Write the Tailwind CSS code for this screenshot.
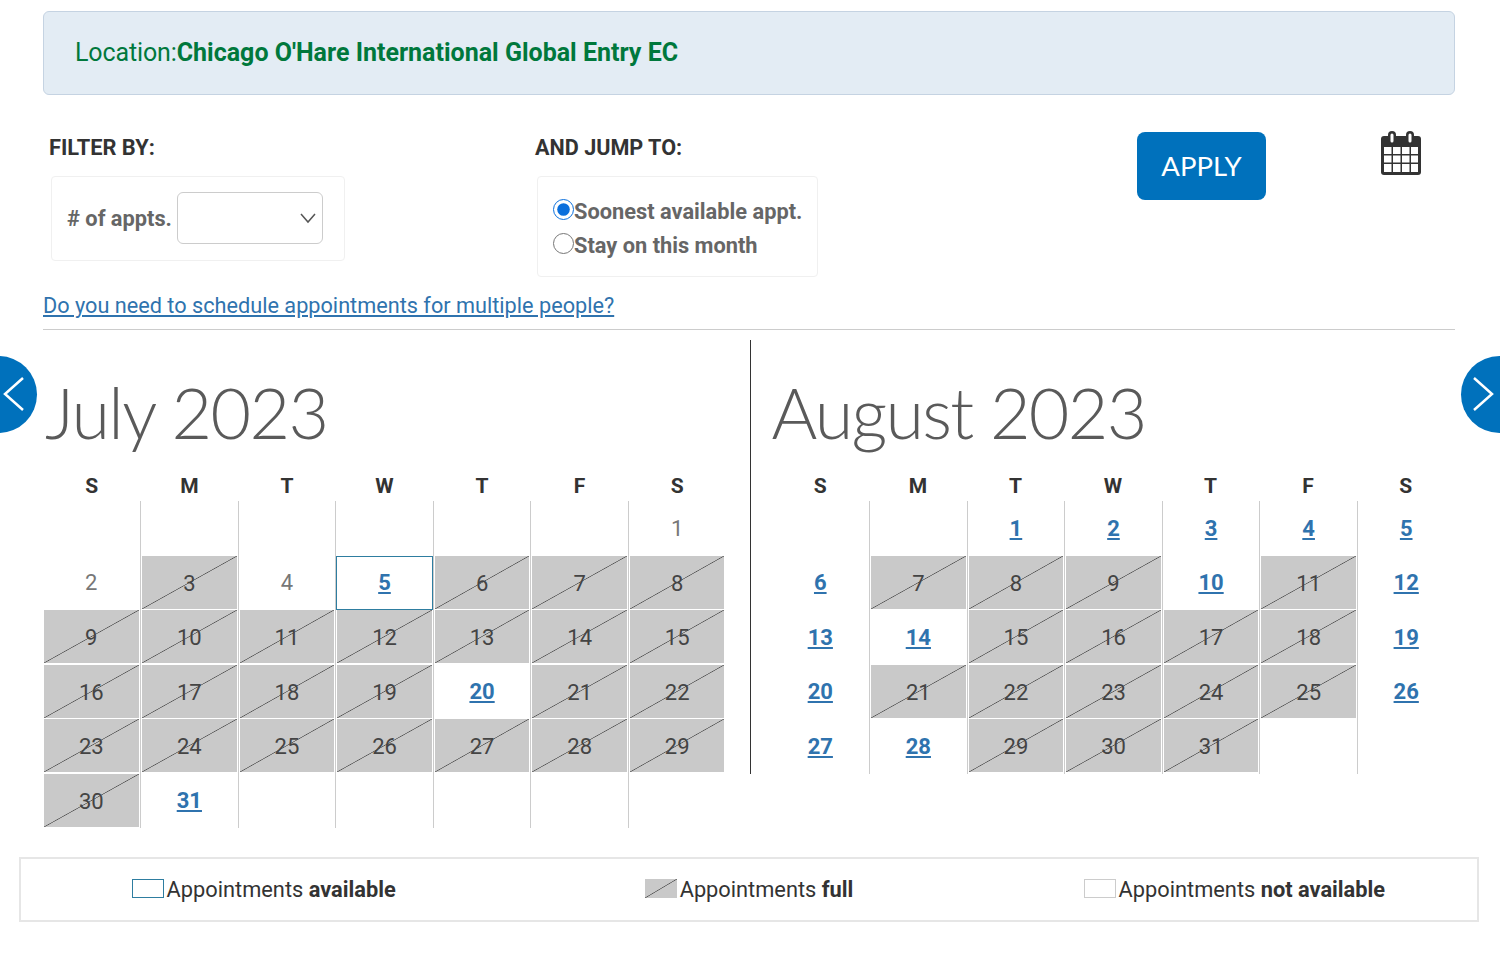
<!DOCTYPE html>
<html lang="en">
<head>
<meta charset="utf-8">
<title>Calendar</title>
<script src="https://cdn.jsdelivr.net/npm/@tailwindcss/browser@4"></script>
</head>
<body class="bg-white font-['Roboto',sans-serif] overflow-hidden">
<div class="relative w-[1500px] h-[964px] pt-[11px]">
  <div class="ml-[43px] mr-[45px] h-[84px] flex items-center pl-[31px] bg-[#e3ecf4] border border-[#c5d3e2] rounded-[6px] text-[25px] text-[#00783c]">
    <span class="font-normal tracking-[-0.12px]">Location:</span><span class="font-bold">Chicago O'Hare International Global Entry EC</span>
  </div>

  <div class="ml-[43px] mr-[45px] mt-[37px] flex items-start h-[151px]">
    <div class="w-[492px] pt-[1px]">
      <h2 class="pl-[6px] text-[21.8px] leading-[30px] font-bold text-[#333]">FILTER BY:</h2>
      <div class="ml-[8px] mt-[13px] w-[294px] h-[85px] flex items-center pl-[15px] border border-[#f0f0f0] rounded-[4px]">
        <label class="text-[21.8px] font-bold text-[#666] pt-[1px]"># of appts.</label>
        <div class="relative ml-[5px] -mt-[2px] w-[146px] h-[52px]">
          <select class="appearance-none w-full h-full bg-white border border-[#ccc] rounded-[6px]"></select>
          <svg class="absolute right-[6px] top-[20px] w-[18px] h-[12px]" viewBox="0 0 18 12" fill="none" stroke="#555" stroke-width="1.5"><path d="M2 2l7 8 7-8"/></svg>
        </div>
      </div>
    </div>
    <div class="w-[602px] pt-[1px]">
      <h2 class="text-[21.6px] leading-[30px] font-bold text-[#333]">AND JUMP TO:</h2>
      <div class="ml-[2px] mt-[13px] w-[281px] h-[101px] flex flex-col gap-[8px] pt-[22px] pl-[15px] border border-[#f0f0f0] rounded-[4px] text-[21.8px] font-bold text-[#666]">
        <label class="flex items-center h-[26px]"><input type="radio" name="jump" checked class="w-[21px] h-[21px] m-0 accent-[#0a6fdc] -mt-[6px]"><span>Soonest available appt.</span></label>
        <label class="flex items-center h-[26px]"><input type="radio" name="jump" class="w-[21px] h-[21px] m-0 accent-[#0a6fdc] -mt-[6px]"><span>Stay on this month</span></label>
      </div>
    </div>
    <button class="w-[129px] h-[68px] bg-[#0071bc] rounded-[8px] text-white text-[27.5px] font-['Lato',sans-serif]">APPLY</button>
    <svg class="ml-[114px] -mt-[2px] w-[42px] h-[46px]" viewBox="0 0 42 46">
      <rect x="1" y="6" width="40" height="39" rx="3" fill="#333"/>
      <rect x="8" y="1" width="8" height="13" rx="4" fill="#333"/>
      <rect x="26" y="1" width="8" height="13" rx="4" fill="#333"/>
      <rect x="10.5" y="3.5" width="3" height="9" rx="1.5" fill="#fff"/>
      <rect x="28.5" y="3.5" width="3" height="9" rx="1.5" fill="#fff"/>
      <g fill="#fff">
        <rect x="4" y="17" width="7.5" height="7"/><rect x="13" y="17" width="7.5" height="7"/><rect x="22" y="17" width="7.5" height="7"/><rect x="31" y="17" width="7" height="7"/>
        <rect x="4" y="25.5" width="7.5" height="7"/><rect x="13" y="25.5" width="7.5" height="7"/><rect x="22" y="25.5" width="7.5" height="7"/><rect x="31" y="25.5" width="7" height="7"/>
        <rect x="4" y="34" width="7.5" height="8"/><rect x="13" y="34" width="7.5" height="8"/><rect x="22" y="34" width="7.5" height="8"/><rect x="31" y="34" width="7" height="8"/>
      </g>
    </svg>
  </div>

  <div class="ml-[43px] mr-[45px] h-[38px] mt-[9px] border-b border-[#ccc] text-[21.7px] leading-[28px]">
    <a href="#" class="text-[#2f73ae] underline">Do you need to schedule appointments for multiple people?</a>
  </div>

  <div class="ml-[43px] mt-[10px] flex items-start">
    <section class="w-[706.5px]">
      <h1 class="h-[117px] pl-[2px] text-[70px] leading-[144px] font-light text-[#5a5a5a] font-['Lato',sans-serif] tracking-[-1.6px]">July 2023</h1>
      <div class="grid grid-cols-7 w-[683px] h-[44px] pt-[14px] items-center text-center text-[21px] font-bold text-[#333]"><span>S</span><span>M</span><span>T</span><span>W</span><span>T</span><span>F</span><span>S</span></div>
      <div id="july" class="grid grid-cols-7 w-[683px] -ml-[0.5px] auto-rows-[54.5px]"></div>
    </section>
    <section class="border-l border-[#333] pl-[21px]">
      <h1 class="h-[117px] text-[70px] leading-[144px] font-light text-[#5a5a5a] font-['Lato',sans-serif] tracking-[-1.7px]">August 2023</h1>
      <div class="grid grid-cols-7 w-[683px] h-[44px] pt-[14px] items-center text-center text-[21px] font-bold text-[#333]"><span>S</span><span>M</span><span>T</span><span>W</span><span>T</span><span>F</span><span>S</span></div>
      <div id="august" class="grid grid-cols-7 w-[683px] auto-rows-[54.5px]"></div>
    </section>
  </div>

  <div class="absolute left-[19px] top-[857px] w-[1460px] h-[65px] grid grid-cols-3 border-2 border-[#e6e6e6] text-[21.8px] text-[#333]">
    <div class="flex items-center justify-center"><span class="w-[32px] h-[19px] -mt-[2px] border border-[#2e7da0]"></span><span class="ml-[3px] pt-[1px]">Appointments <b>available</b></span></div>
    <div class="flex items-center justify-center"><span class="w-[32px] h-[19px] -mt-[2px] bg-[#c9c9c9] bg-[linear-gradient(to_bottom_right,transparent_calc(50%-0.7px),#555_50%,transparent_calc(50%+0.7px))]"></span><span class="ml-[3px] pt-[1px]">Appointments <b>full</b></span></div>
    <div class="flex items-center justify-center"><span class="w-[32px] h-[19px] -mt-[2px] border border-[#ccc]"></span><span class="ml-[3px] pt-[1px]">Appointments <b>not available</b></span></div>
  </div>

  <div class="absolute left-[-40px] top-[356px] w-[77px] h-[77px] rounded-full bg-[#0071bc]">
    <svg class="absolute left-[43px] top-[20px] w-[22px] h-[36px]" viewBox="0 0 22 36" fill="none" stroke="#fff" stroke-width="2.5"><path d="M20 2L2 18l18 16"/></svg>
  </div>
  <div class="absolute left-[1461px] top-[356px] w-[77px] h-[77px] rounded-full bg-[#0071bc]">
    <svg class="absolute left-[11px] top-[20px] w-[22px] h-[36px]" viewBox="0 0 22 36" fill="none" stroke="#fff" stroke-width="2.5"><path d="M2 2l18 16L2 34"/></svg>
  </div>
</div>
<script>
const base = "relative flex items-center justify-center text-[22px] ";
const styles = {
  e: base,
  p: base + "text-[#777]",
  l: base + "font-bold text-[#2f73ae] underline",
  s: base + "font-bold text-[#2f73ae] underline outline outline-1 -outline-offset-1 outline-[#2e7da0] z-10",
  f: base + "text-[#444] bg-[#c9c9c9] bg-[linear-gradient(to_bottom_right,transparent_calc(50%-0.7px),#555_50%,transparent_calc(50%+0.7px))] bg-clip-content bg-origin-content pl-[1px] pr-[1px] pb-[1.5px]"
};
const nudge = "relative top-[1px]";
function fill(id, cells) {
  const root = document.getElementById(id);
  cells.forEach((c, i) => {
    const wrap = document.createElement("div");
    wrap.className = i % 7 === 0 ? "grid" : "grid border-l border-[#ccc]";
    const cell = document.createElement(c[0] === "l" || c[0] === "s" ? "a" : "div");
    cell.className = styles[c[0]];
    if (c[0] === "l" || c[0] === "s") cell.href = "#";
    const label = document.createElement("span");
    if (c[0] === "f") label.className = nudge;
    label.textContent = c.slice(1);
    cell.appendChild(label);
    wrap.appendChild(cell);
    root.appendChild(wrap);
  });
}
fill("july", "e e e e e e p1 p2 f3 p4 s5 f6 f7 f8 f9 f10 f11 f12 f13 f14 f15 f16 f17 f18 f19 l20 f21 f22 f23 f24 f25 f26 f27 f28 f29 f30 l31 e e e e e".split(" "));
fill("august", "e e l1 l2 l3 l4 l5 l6 f7 f8 f9 l10 f11 l12 l13 l14 f15 f16 f17 f18 l19 l20 f21 f22 f23 f24 f25 l26 l27 l28 f29 f30 f31 e e".split(" "));
</script>
</body>
</html>
